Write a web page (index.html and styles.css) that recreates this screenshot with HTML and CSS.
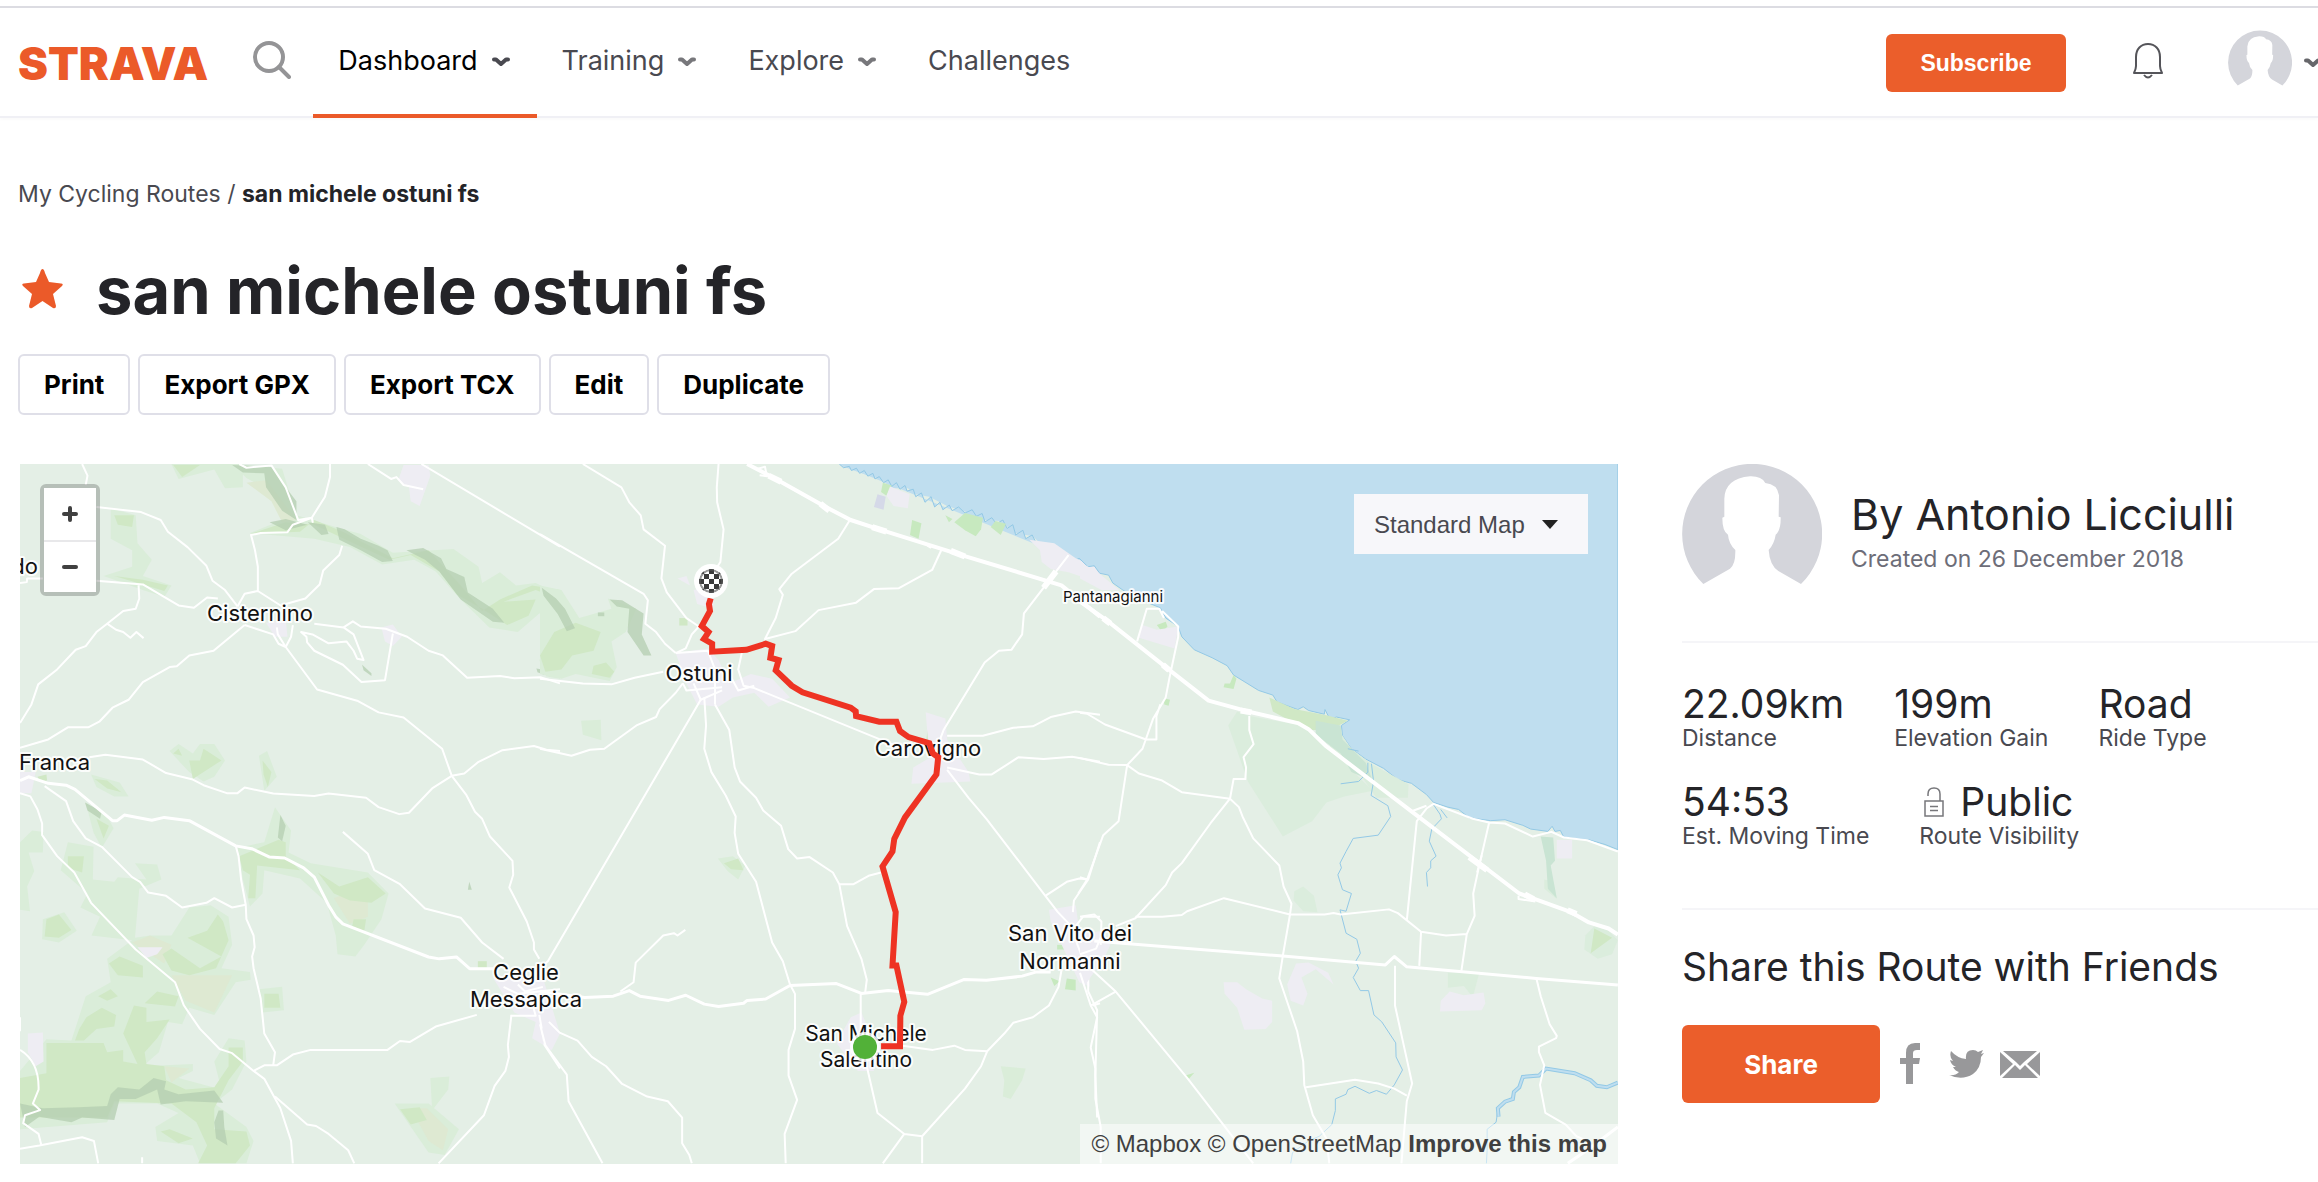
FILE: index.html
```
<!DOCTYPE html>
<html lang="en">
<head>
<meta charset="utf-8">
<title>san michele ostuni fs | Strava</title>
<meta name="viewport" content="width=device-width, initial-scale=1">
<link rel="stylesheet" href="styles.css">
</head>
<body>
<svg class="defs" aria-hidden="true">
  <symbol id="chevron" viewBox="0 0 18 10"><path d="M2 2.500L4 2.500L9 7L14 2.500L16 2.500" fill="none" stroke="currentColor" stroke-width="4" stroke-linecap="round" stroke-linejoin="round"/></symbol>
  <symbol id="avatar" viewBox="36 26 420 360"><path fill="#d4d5db" d="M100 386A210 210 0 1 1 393 386L325 347Q299 330 296 284Q313 265 317 238Q333 225 332 186L326 184L327 120Q322 86 286 83Q275 62 240 63Q165 70 163 130L163 184L157 187Q157 228 174 238Q176 265 196 284Q197 328 180 340Z"/></symbol>
</svg>

<header class="header">
  <a class="logo" href="#">STRAVA</a>
  <button class="icon-button search" aria-label="Search">
    <svg width="38" height="38" viewBox="0 0 38 38" fill="none" stroke="#949496" stroke-width="4" stroke-linecap="round"><circle cx="16" cy="16" r="14"/><path d="M26 26L36 36"/></svg>
  </button>
  <nav class="nav">
    <a class="nav-item active" href="#">Dashboard <svg width="18" height="10"><use href="#chevron"/></svg></a>
    <a class="nav-item" href="#">Training <svg width="18" height="10"><use href="#chevron"/></svg></a>
    <a class="nav-item" href="#">Explore <svg width="18" height="10"><use href="#chevron"/></svg></a>
    <a class="nav-item" href="#">Challenges</a>
  </nav>
  <div class="account">
    <button class="subscribe">Subscribe</button>
    <button class="icon-button bell" aria-label="Notifications">
      <svg width="30" height="36" viewBox="0 0 30 36" fill="none" stroke="#55555a" stroke-width="2" stroke-linejoin="round"><path d="M3 23V14C3 6 8 1 15 1S27 6 27 14V23Q27 26 29 30H1Q3 26 3 23ZM11 32Q15 37 19 32"/></svg>
    </button>
    <a class="profile" href="#" aria-label="Profile">
      <svg width="64" height="56"><use href="#avatar"/></svg>
      <svg class="profile-arrow" width="14" height="10" viewBox="0 0 14 10"><path d="M2 2.500L4 2.500L9 7L14 2.500L16 2.500" fill="none" stroke="currentColor" stroke-width="4" stroke-linecap="round" stroke-linejoin="round"/></svg>
    </a>
  </div>
</header>

<main class="main">
  <div class="crumbs"><a href="#">My Cycling Routes</a> / <strong>san michele ostuni fs</strong></div>
  <div class="title-row">
    <svg width="43" height="41" viewBox="0 0 43 41"><path d="M21.500 1Q23 1 24 5L28 14L40 15.500Q43 16 41 18L32 26L35 38Q35 41 32 40L21.500 33L11 40Q8 41 8 38L11 26L2 18Q0 16 3 15.500L15 14L19 5Q20 1 21.500 1Z" fill="#eb5a29"/></svg>
    <h1>san michele ostuni fs</h1>
  </div>
  <div class="actions">
    <button>Print</button>
    <button>Export GPX</button>
    <button>Export TCX</button>
    <button>Edit</button>
    <button>Duplicate</button>
  </div>

  <div class="content">
    <section class="map" aria-label="Route map">
      <svg class="map-canvas" viewBox="20 464 1598 700" preserveAspectRatio="xMidYMid slice">
        <rect class="land" x="20" y="464" width="1598" height="700"/>

        <!-- western tile -->
        <g transform="translate(0 450) scale(.35714 .46684)">
          <g class="wood-light">
            <path d="M480 30H680V80L630 82L600 42L500 62Z"/>
            <path d="M56 840L90 815L122 818L120 862L80 862L96 902L76 935L84 988L56 985Z"/>
            <path d="M190 840L262 850L260 920L320 925L330 915L410 920L378 885L440 888L452 920L390 940L378 1045L420 1040L480 1040L530 980L590 975L640 1000L650 1060L620 1110L700 1118L702 1135L660 1140L600 1210L530 1195L510 1230L470 1225L445 1290L400 1320L540 1315L540 1330L500 1345L620 1370L600 1310L640 1260L685 1265L690 1310L650 1370L600 1400L690 1450L710 1480L690 1528H560L540 1490L440 1480L435 1450L500 1420L440 1400L320 1400L300 1440L56 1455V1330L130 1262L200 1265L240 1170L310 1140L300 1090L370 1050L256 1040L280 1000L225 980L245 950L170 900Z"/>
            <path d="M120 1005L180 990L215 1030L165 1055L118 1048Z"/>
            <path d="M475 645L500 630L540 650L560 630L600 630L630 665L600 700L570 710L530 690Z"/>
            <path d="M725 655L748 645L775 700L740 730Z"/>
            <path d="M255 695L335 712L360 742L320 742L270 722Z"/>
            <path d="M240 755L300 785L318 810L285 852L262 820Z"/>
            <path d="M665 852L740 840L770 765L815 815L808 862L870 885L1030 905L1088 950L1068 1005L1020 1060L995 1085L945 1080L940 1040L915 970L840 918L740 900L735 950L700 978L680 920Z"/>
            <path d="M725 1155L790 1150L795 1200L735 1205Z"/>
            <path d="M1205 1345L1258 1342L1255 1370L1210 1415Z"/>
            <path d="M1105 1400L1200 1400L1285 1455L1245 1510L1200 1505Z"/>
            <path d="M310 125L380 140L385 200L425 235L400 270L480 290L460 315L400 300L290 270L370 250L370 215L310 190Z"/>
            <path d="M700 178L790 150L760 90L690 60L650 30L790 40L830 140L940 165L1010 180L1100 220L1270 212L1340 250L1350 285L1400 262L1445 290L1500 285L1568 310V345L1510 350L1450 390L1370 380L1290 320L1220 260L1160 235L1070 245L980 208L880 190L800 185Z"/>
            <path d="M1510 450L1550 410L1568 410V490L1530 485Z"/>
          </g>
          <g class="scrub">
            <path d="M690 70L745 65L830 150L790 155L760 110Z"/>
            <path d="M480 1125L650 1125L600 1205L520 1180Z"/>
            <path d="M370 1055L420 1040L480 1060L460 1100Z"/>
            <path d="M460 1320L530 1325L480 1355Z"/>
            <path d="M935 960L1030 930L1030 1000L980 1015Z"/>
            <path d="M1150 1410L1195 1410L1255 1455L1240 1500L1200 1480Z"/>
          </g>
          <g class="wood">
            <path d="M485 32H560L510 58Z"/>
            <path d="M130 1270H290L300 1290L345 1285L345 1310L385 1315L345 1250L375 1190L410 1195L410 1225L475 1220L440 1260L405 1290L410 1315L460 1320L465 1350L520 1370L600 1365L640 1320L640 1280L680 1280L680 1310L640 1350L600 1410L600 1455L690 1460L700 1490L660 1528H555L580 1490L550 1440L480 1400L320 1395L300 1430L56 1430V1345L130 1335Z"/>
            <path d="M242 1215L285 1195L325 1210L320 1235L270 1240L235 1265H210L222 1240Z"/>
            <path d="M455 1080L480 1068L560 1110L620 1085L525 1045L580 1030L610 995L625 1010L640 1050L605 1110L530 1125L480 1115Z"/>
            <path d="M305 1100L335 1085L400 1105L400 1130L330 1125Z"/>
            <path d="M130 1005L165 995L200 1028L165 1045L125 1042Z"/>
            <path d="M190 870L235 870L230 905L190 895Z"/>
            <path d="M405 1185L440 1160L500 1170L490 1192Z"/>
            <path d="M275 1170L310 1155L330 1170L300 1180Z"/>
            <path d="M530 665L560 665L570 640L600 655L620 665L570 690L540 705Z"/>
            <path d="M735 665L760 690L750 722L738 695Z"/>
            <path d="M485 650L500 640L510 655Z"/>
            <path d="M265 705L300 708L340 733L300 725Z"/>
            <path d="M270 790L305 805L290 832Z"/>
            <path d="M670 870L780 835L800 840L800 870L840 900L720 890L715 960L695 960L700 910L680 900Z"/>
            <path d="M890 905L950 935L1030 915L1080 950L1040 970L980 965L935 950Z"/>
            <path d="M990 1005L1025 1005L1020 1030L985 1025Z"/>
            <path d="M740 1165H780L785 1195L740 1195Z"/>
            <path d="M1120 1412L1175 1408L1195 1435L1150 1445Z"/>
            <path d="M450 1460L475 1455L540 1475L500 1485Z"/>
            <path d="M320 140L375 140L370 165L330 160Z"/>
            <path d="M700 180L800 155L880 160L990 200L1090 235L1150 225L1230 260L1280 310L1350 340L1420 375L1480 355L1500 320L1410 325L1500 300L1568 320V300L1490 290L1400 320L1350 345L1290 290L1200 215L1100 232L960 175L880 150L840 175Z"/>
            <path d="M1520 455L1560 430L1568 470L1540 475Z"/>
            <path d="M105 700L130 695L132 708L112 710Z"/>
            <path d="M1338 1095H1363V1109H1338Z"/>
            <path d="M320 270L400 278L470 290L460 302L400 288Z"/>
          </g>
          <g class="ridge">
            <path d="M650 32L760 36L800 80L830 110L830 150L790 130L745 80L740 50L680 48Z"/>
            <path d="M862 155L910 160L920 180L900 182Z"/>
            <path d="M942 165L965 170L1010 190L1060 205L1085 215L1100 238L1070 240L1010 215L950 192Z"/>
            <path d="M1138 215L1185 210L1235 232L1250 255L1300 272L1310 305L1380 340L1412 370L1380 368L1290 320L1230 260L1190 235Z"/>
            <path d="M1518 300L1568 320V352L1525 325Z"/>
            <path d="M238 755L285 775L280 790L245 772Z"/>
            <path d="M785 782L800 805L790 838L778 830Z"/>
            <path d="M56 1400L120 1410L220 1408L300 1405L310 1380L330 1365L390 1370L430 1345L465 1352L460 1370L500 1380L600 1372L625 1398L520 1395L450 1402L440 1370L380 1390L335 1390L320 1435L230 1430L200 1440L110 1428L70 1450Z"/>
            <path d="M612 1415H625L628 1450L637 1490L605 1475L600 1440Z"/>
            <path d="M1014 460L1040 478V484L1018 472Z"/>
            <path d="M1314 925L1321 942H1310Z"/>
            <path d="M755 155L800 148L860 160L800 172Z"/>
            <path d="M1502 468L1530 472L1525 482L1505 476Z"/>
          </g>
          <g class="urban">
            <path d="M1130 32H1200L1205 55L1175 120L1150 110L1145 80L1115 65Z"/>
            <path d="M1068 380L1100 374L1125 400L1100 420L1078 410Z"/>
            <path d="M745 370L800 365L805 400L770 400Z"/>
            <path d="M56 690L100 690L88 735L56 735Z"/>
            <path d="M78 1250L120 1248L122 1310L100 1320L78 1290Z"/>
            <path d="M385 1065L455 1065L440 1080L410 1088Z"/>
            <path d="M1380 1130L1520 1130L1568 1250L1545 1285L1490 1260L1500 1225L1440 1205Z"/>
          </g>
          <g class="road">
            <path d="M230 30L245 55L240 75M270 122L395 133L450 150L470 175L525 208L578 248L595 280L630 300L665 335"/>
            <path d="M56 285L75 283L76 275L120 275M270 280L400 288L500 333L543 338L580 316L610 318M388 290L390 318L380 340L345 345L300 372L270 390L240 420L212 428L160 470L107 502L88 545L56 585M300 372L325 385L345 390L365 402L382 390L402 403"/>
            <path d="M665 335L685 308L722 302L800 340M722 302V250L714 215L703 182L730 178L805 176L820 160L873 145L910 100L924 58V30M670 30L690 38L760 33L800 80L835 150L873 145L876 156"/>
            <path d="M800 330L855 318L895 288L905 258L950 225L958 205"/>
            <path d="M56 638L135 620L190 594H247L278 582L315 552L360 535L400 497L475 465L495 463L530 440L598 430L685 375M685 375L765 395L780 415L800 422L815 400L820 375M775 380L778 395L800 422"/>
            <path d="M800 422L888 513L1000 537L1060 562L1130 573L1238 640L1265 698L1305 738L1330 775L1350 790L1372 828L1435 880L1437 910L1426 937L1475 1010L1495 1055V1070L1510 1090"/>
            <path d="M880 372L962 380L988 367L1010 378L1080 383L1140 400L1200 430L1240 440L1308 488L1400 484L1440 489L1515 487L1568 500M1100 393L1078 493L1012 497L960 460L880 430L860 412L858 400L843 390L875 395L920 414L970 410L990 430L1000 447L1018 450L990 395L962 380"/>
            <path d="M1030 30L1095 62L1110 58L1130 75L1185 84M1180 30L1568 207"/>
            <path d="M250 658L295 653L400 663L465 692L540 706L570 718L635 735H665L685 723L765 736L880 741L920 736L1025 745L1060 765L1118 780L1145 777L1210 725L1265 698L1300 693L1340 668L1407 643L1495 634L1530 642L1568 645"/>
            <path d="M56 735L85 742L105 770L118 800V825L160 870L208 905L255 970L380 1070L490 1140L515 1190L560 1240L615 1283L650 1292L710 1330L740 1347L785 1410L815 1480L820 1528"/>
            <path d="M125 720L185 752L205 795L240 832L285 850L370 915L392 925L415 948L465 955L510 980L578 970L600 960L650 980L688 974"/>
            <path d="M660 848L668 870L675 920L688 974L690 1005L710 1040L713 1065L706 1085L710 1110L730 1175L740 1250L770 1290L765 1318M710 1330L740 1318L775 1318L820 1295L870 1285H1085L1120 1266L1148 1268L1220 1235L1335 1210"/>
            <path d="M770 1385L860 1445L885 1448L920 1465L975 1500L992 1528"/>
            <path d="M960 818L1030 865L1048 900L1120 930L1190 982L1290 1002L1350 1055L1410 1090"/>
            <path d="M1228 1528L1355 1425L1385 1362L1415 1330L1425 1300L1422 1275L1432 1210"/>
            <path d="M56 1497L110 1490L230 1472L263 1480L275 1528M398 1515V1528M56 1215V1245M56 1285Q110 1310 108 1370L92 1400L112 1414L70 1425L65 1442L108 1465L116 1490"/>
            <path d="M1510 1210L1525 1275L1568 1325M1410 1150L1450 1165L1568 1155M1430 1212H1500L1490 1185M1450 1145L1470 1160L1520 1150"/>
          </g>
          <path class="road major" d="M56 708L80 700L135 714L185 718L210 727L315 794H328L348 782L425 793L460 787L530 794L660 848L705 854L755 872L797 874L850 895L880 915L920 975L940 1000L960 1015L1200 1086L1230 1090L1278 1086L1315 1111H1390"/>
        </g>

        <!-- central tile -->
        <g transform="translate(540 450) scale(.35714 .46684)">
          <path class="sea" d="M838 30L870 42L950 62L990 82L1030 82L1050 95L1090 100L1140 120L1190 132L1240 150L1290 152L1330 178L1380 185L1410 208L1460 218L1500 240L1545 243L1568 258V30Z"/>
          <path class="coast" d="M838 30L850 38L866 35L872 44L886 39L895 50L908 44L918 56L932 50L938 62L950 57L962 70L975 64L985 78L998 70L1008 84L1022 76L1028 88L1045 84L1052 100L1068 92L1078 112L1095 100L1105 122L1120 112L1128 128L1146 118L1154 130L1172 122L1190 135L1210 128L1222 142L1238 136L1246 154L1265 145L1278 158L1296 150L1308 168L1324 160L1332 182L1352 172L1360 190L1378 182L1390 200L1404 202L1412 218L1430 208L1446 222L1462 215L1478 222L1490 240L1510 232L1530 248L1545 243L1568 258"/>
          <g class="wood-light">
            <path d="M115 580L170 578L172 622L120 610Z"/>
            <path d="M498 875L540 870L575 890L555 920L525 902Z"/>
            <path d="M1290 1320L1360 1325L1350 1350L1318 1390L1296 1385L1300 1350Z"/>
            <path d="M0 290L60 300L110 360L200 340L190 318L270 340L240 390L200 410L215 465L195 495L100 480L60 490L0 480Z"/>
          </g>
          <g class="wood">
            <path d="M390 360H413V376H390Z"/>
            <path d="M515 885L555 875L570 900L535 898Z"/>
            <path d="M40 390L100 370L170 390L150 430L90 440L60 470L15 475L0 440Z"/>
            <path d="M150 462L185 455L208 475L195 488L145 480Z"/>
          </g>
          <g class="park">
            <path d="M960 70L985 76L970 98L955 90Z"/>
            <path d="M1042 150L1068 157L1060 190L1036 182Z"/>
            <path d="M1160 155L1190 135L1240 145L1235 170L1220 185L1190 172Z"/>
            <path d="M1262 165L1275 152L1305 158L1290 182Z"/>
            <path d="M1135 140L1155 148L1145 155Z"/>
            <path d="M1515 270L1545 262L1558 275L1540 283Z"/>
            <path d="M1085 600H1100V620H1082Z"/>
            <path d="M1430 1130L1455 1138L1440 1148Z"/>
            <path d="M1475 1132L1500 1135V1158L1470 1155Z"/>
            <path d="M1448 1060H1468V1070H1448Z"/>
          </g>
          <g class="ridge">
            <path d="M5 295L45 318L70 340L98 382L75 388L50 352L10 312Z"/>
            <path d="M195 320L230 322L290 350L285 395L312 440L290 440L245 390L250 340L215 335Z"/>
            <path d="M162 348H180V356H162Z"/>
          </g>
          <g class="urban">
            <path d="M980 78L1035 95L1030 125L990 120L970 98Z"/>
            <path d="M1370 192L1440 200L1500 232L1568 255V285L1480 262L1430 255L1405 240L1400 215Z"/>
            <path d="M430 300L490 290L485 340L440 330Z"/>
            <path d="M385 275L410 270L420 290Z"/>
            <path d="M380 435L470 425L500 450L530 500L590 480L650 490L700 530L640 550L600 520L540 530L500 550L440 545L410 500Z"/>
            <path d="M1080 562L1135 575L1140 620L1200 690L1205 710L1040 715L1045 680L1090 660Z"/>
            <path d="M1425 985L1500 975L1510 1030L1568 1040V1060L1530 1080L1540 1150L1510 1140L1430 1010Z"/>
            <path d="M870 1215L900 1205L925 1250L935 1330L890 1330L830 1270Z"/>
            <path d="M5 1238L45 1258L30 1285L8 1270Z"/>
          </g>
          <path class="harbour" d="M945 95L968 100L962 128L935 122Z"/>
          <g class="road">
            <path d="M120 30L228 80L250 112L282 140L290 170L350 205L340 275L355 305L410 360L445 378M445 378L425 395L408 425L380 435M500 30L495 80L496 112L514 170L505 240L480 270"/>
            <path d="M0 180L290 308L302 322L295 372L325 390L350 415L380 435"/>
            <path d="M866 152L835 190L705 265L670 298L680 310L660 360L630 405L715 388L780 343L885 327L935 298L1005 296L1098 257L1125 212"/>
            <path d="M0 490L120 500L200 502L265 488L345 475M0 640L88 655L140 642L180 640L270 590L325 572L335 555L380 520L400 500"/>
            <path d="M450 535L22 1095L0 1110M460 530L465 590L460 640L480 690L520 740L548 785L545 820L555 865L605 925L650 1055L680 1095L700 1145M490 545L530 600L545 680L560 710L605 745L625 772L675 805L695 855L720 875L755 872L820 905L838 930L860 1020L900 1090L915 1135L910 1165"/>
            <path d="M838 930L878 930L920 912L955 905M565 435L555 470L570 505L600 510L1000 635M400 500L410 515L510 508M430 500L450 535L510 515M380 435L470 430L490 470L490 545M600 505L555 515L530 480"/>
            <path d="M1480 225L1355 350L1350 395L1320 428L1285 430L1245 455L1130 600L1110 640"/>
            <path d="M1140 612H1240L1325 595L1380 592L1430 572L1500 560L1568 567M1140 680L1230 695H1265L1340 658L1410 662L1490 657L1568 668"/>
            <path d="M1140 685L1200 745L1250 790L1415 955L1450 990L1500 1030M1415 955L1475 925L1510 918L1535 920L1568 840M1535 920L1495 965L1492 990M1500 1020L1520 1000L1568 1000"/>
            <path d="M225 1160L262 1140L268 1098L345 1040L375 1035L385 1040L407 1028"/>
            <path d="M700 1145L714 1165V1240L696 1285V1340L720 1392L685 1465L688 1528M25 1225L55 1248L105 1265L145 1300L185 1320L230 1358L300 1385L358 1395L398 1430V1485L418 1510L425 1528M0 1230L15 1275L75 1338L80 1395L175 1528"/>
            <path d="M898 1163V1240M1015 1276L1100 1285L1160 1276L1190 1285L1252 1288L1300 1250L1325 1227L1380 1215L1425 1190L1452 1150L1460 1115M1252 1288L1235 1320L1190 1368L1070 1470L1020 1465L960 1528M1070 1470V1528M915 1320L945 1420L1020 1465"/>
            <path d="M1500 1050L1535 1120V1160L1560 1200L1555 1340L1560 1430M1548 1190L1568 1185"/>
          </g>
          <path class="road major" d="M0 1160L125 1173L205 1170L250 1158L280 1170L360 1179L408 1168L460 1187L500 1192L570 1185L580 1179L632 1176L700 1147L830 1143L900 1164L975 1158L1085 1166L1188 1134L1250 1136L1350 1127L1390 1118H1430"/>
          <path class="road trunk" d="M580 30L660 62L800 122L870 150L950 170L1180 225L1460 290L1568 357"/>
          <path class="road" d="M610 40L630 36L635 56L615 54M1085 205L1095 210"/>
          <path class="road ramp" d="M640 55L675 68M785 115L810 130M930 165L970 175M1150 216L1190 228M1445 260L1410 295"/>
        </g>

        <!-- eastern tile -->
        <g transform="translate(1080 450) scale(.35714 .46684)">
          <path class="sea shore" d="M-2 232L22 250L40 248L55 264L80 268L92 285L120 300L160 318L225 338L240 360L275 378L285 400L320 428L370 445L412 462L430 482L500 515L540 525L552 540L610 556L625 550L640 558L684 566L686 556L700 577L718 572L755 578L732 590L735 612L760 640L800 662L850 682L890 706L928 714L970 738L990 755L1030 765L1060 770L1090 788L1150 794L1190 792L1240 804L1262 812L1310 817L1322 806L1330 817L1345 815L1355 830L1425 835L1470 845L1506 856V-20H-2"/>
          <g class="reserve">
            <path d="M415 590L440 560L475 570L620 590L700 640L820 730L740 742L690 755L650 795L568 828L470 710Z"/>
            <path d="M700 590L735 612L760 640L815 672L920 716L918 745L830 745L780 690L700 640Z"/>
            <path d="M600 945L625 935L655 955L665 990L625 988L598 965Z"/>
            <path d="M1030 1120H1118L1100 1172L1075 1148L1030 1152Z"/>
            <path d="M1415 1040L1440 1020L1480 1030L1506 1050L1490 1080L1450 1090L1412 1070Z"/>
            <path d="M1300 920L1325 925L1335 962L1300 940Z"/>
          </g>
          <path class="wood" d="M530 530L600 555L690 568L750 580L700 600L650 600L600 585L540 560ZM1440 1025L1490 1045L1430 1078Z"/>
          <path class="marsh" d="M660 580L730 590L735 620L800 670L820 710L760 690L730 650L660 610ZM1290 828L1325 830L1330 880L1318 890L1335 960L1310 940L1305 880Z"/>
          <g class="park">
            <path d="M430 482L438 490L430 512L402 508L405 500L420 500Z"/>
            <path d="M215 375L240 368L245 378L230 390Z"/>
            <path d="M235 532L252 535L248 548L236 545Z"/>
            <path d="M5 268L25 262L45 272L30 283Z"/>
            <path d="M295 1340L320 1334L305 1347Z"/>
          </g>
          <g class="urban">
            <path d="M175 375L215 385L275 378L265 425L165 402Z"/>
            <path d="M402 1140L440 1140L465 1155L510 1175L538 1180V1225L520 1240L460 1242L440 1195L405 1165Z"/>
            <path d="M580 1145L605 1100L640 1098L695 1120L710 1145L660 1112L620 1130L637 1165L625 1190L590 1180Z"/>
            <path d="M1010 1180L1035 1160L1075 1168L1130 1162L1135 1185L1125 1200L1008 1203Z"/>
            <path d="M1335 835H1378V875H1335Z"/>
            <path d="M0 1040L60 1030L85 1060L70 1085L20 1140L0 1120Z"/>
            <path d="M0 240L50 262L110 300L60 300L0 275Z"/>
          </g>
          <g class="river">
            <path d="M816 672L822 710L815 740L862 762L870 785L835 825L765 832L745 860L728 885L732 895L722 910L735 942L760 950L745 988L728 985L745 1035L775 1048L785 1078L772 1095L780 1110L765 1130L785 1158H808L823 1210L845 1225L884 1270L885 1300L903 1328L880 1360L858 1380L830 1372L810 1378L770 1363L750 1370L745 1380L715 1390V1415L705 1445L670 1470L640 1480L595 1505L590 1528"/>
            <path d="M990 760L1008 780L1012 790L985 812L978 838L997 870L982 880V895L970 905L973 935M730 715L780 710L806 690V670M750 640L780 645"/>
            <path d="M1170 1415L1165 1440L1140 1455V1500L1138 1528M1010 770L1028 788"/>
          </g>
          <path class="river broad" d="M1506 1355L1475 1365L1447 1362L1430 1350L1385 1335L1305 1325L1285 1340L1240 1343L1230 1365L1215 1375L1212 1390L1190 1396L1170 1410L1172 1428"/>
          <path class="river inner" d="M1506 1355L1475 1365L1447 1362L1430 1350L1385 1335L1305 1325L1285 1340L1240 1343L1230 1365L1215 1375L1212 1390L1190 1396L1170 1410L1172 1428"/>
          <g class="road">
            <path d="M230 345L275 378V400L250 490L240 530L205 575L175 640L132 675L108 795L65 825L20 920L-5 950M160 410L187 340H222L235 360M0 563L20 565L70 588L185 620H214V570L225 545M0 660L80 674L132 675L165 693L230 708L285 733L420 747"/>
            <path d="M420 747L430 705H463L465 680L458 658L486 630L474 600V570M420 747L365 800L285 885L258 905L240 932L155 1003L100 1020M420 747L445 765L455 785L485 832L558 890L570 935L592 972L588 995L568 1083L558 1132L608 1245L625 1310L628 1360L652 1425L690 1475L698 1528"/>
            <path d="M155 1000H230L285 996L300 988L403 960L588 995H685L710 992L730 995L865 984L890 992L955 1032L1025 1040L1083 1037L1105 998L1101 950L1115 900L1145 800M1083 1037L1068 1115M955 1032L950 1105M915 1008L943 795L970 768L990 758L1100 790L1145 798L1190 800L1268 828L1320 818L1355 830L1420 836L1506 860"/>
            <path d="M882 1105V1190L905 1270L930 1357L915 1395L900 1528M633 1365L770 1349L835 1357L880 1368L915 1383M1278 1132L1290 1170L1315 1230L1335 1255L1333 1260L1285 1278V1290L1300 1318L1288 1360L1303 1420L1360 1445L1390 1470L1420 1480"/>
            <path d="M0 1090L100 1160L300 1345L485 1528M100 1160L30 1190L0 1120M30 1190L48 1215L30 1280L43 1325V1390L58 1450V1528M0 1000L40 995L60 1010L58 1060M0 1080L45 1068L60 1040M0 915L20 920M1228 955V962L1275 967"/>
            <path d="M925 775L970 762M1112 905L1125 868"/>
          </g>
          <path class="road major" d="M40 1052L568 1084L855 1103L880 1085L915 1107L1278 1132L1506 1146"/>
          <path class="road trunk" d="M0 325L75 365L240 465L360 537L470 560L610 585L640 598L690 635L930 775L1230 950L1375 990L1425 1012L1480 1025L1506 1038"/>
          <path class="road ramp" d="M65 360L85 372M232 460L250 472M450 558L480 562M1090 872L1140 900M1245 952L1270 962M1365 986L1390 994"/>
          <path class="road major" d="M1366 1528L1420 1500L1506 1450"/>
        </g>

        <g class="place">
          <text x="38" y="574" text-anchor="end">do</text>
          <text x="260" y="621">Cisternino</text>
          <text x="19" y="770" text-anchor="start">Franca</text>
          <text x="526" y="980">Ceglie</text>
          <text x="526" y="1007">Messapica</text>
          <text x="699" y="681">Ostuni</text>
          <text x="928" y="756">Carovigno</text>
          <text x="1070" y="941">San Vito dei</text>
          <text x="1070" y="969">Normanni</text>
        </g>
        <g class="place town">
          <text x="866" y="1041">San Michele</text>
          <text x="866" y="1067">Salentino</text>
        </g>
        <text class="place hamlet" x="1113" y="602">Pantanagianni</text>

        <g transform="translate(540 450) scale(.35714 .46684)">
          <path class="route" d="M478 318L473 330L476 345L453 377L472 390L459 405L482 415V432L578 428L632 415L650 420L645 445L668 450L660 472L705 505L735 519L870 552L884 560L885 570L950 582H998L1008 602L1032 615L1090 628L1100 650L1115 658L1110 695L1022 787L992 833L987 860L959 892L996 990L987 1104H998L1020 1182L1009 1212L1008 1277H955"/>
        </g>
        <circle cx="865" cy="1047" r="15" fill="#fff" fill-opacity=".85"/>
        <circle cx="865" cy="1047" r="12" fill="#52b138"/>
        <circle cx="711" cy="581" r="17" fill="#fff"/>
        <clipPath id="finish"><circle cx="711" cy="581" r="12"/></clipPath>
        <g clip-path="url(#finish)">
          <path fill="#3a3a3a" d="M699 569h5v5h-5zM709 569h5v5h-5zM719 569h5v5h-5zM704 574h5v5h-5zM714 574h5v5h-5zM699 579h5v5h-5zM709 579h5v5h-5zM719 579h5v5h-5zM704 584h5v5h-5zM714 584h5v5h-5zM699 589h5v5h-5zM709 589h5v5h-5zM719 589h5v5h-5z"/>
          <circle cx="711" cy="581" r="11" fill="none" stroke="#555" stroke-opacity=".6" stroke-width="2"/>
        </g>
      </svg>

      <div class="zoom">
        <button aria-label="Zoom in"><svg width="16" height="16" viewBox="0 0 16 16"><path d="M8 2V14M2 8H14"/></svg></button>
        <button aria-label="Zoom out"><svg width="16" height="16" viewBox="0 0 16 16"><path d="M2 8H14"/></svg></button>
      </div>
      <div class="map-type">
        <select aria-label="Map type"><option>Standard Map</option></select>
        <svg width="16" height="9" viewBox="0 0 16 9"><path d="M0 0H16L8 9Z" fill="#222"/></svg>
      </div>
      <div class="attribution"><a href="#">© Mapbox</a> <a href="#">© OpenStreetMap</a> <a href="#"><strong>Improve this map</strong></a></div>
    </section>

    <aside class="sidebar">
      <div class="author">
        <svg width="140" height="120"><use href="#avatar"/></svg>
        <div class="author-text">
          <h2>By Antonio Licciulli</h2>
          <p>Created on 26 December 2018</p>
        </div>
      </div>
      <div class="stats">
        <dl class="stat-row">
          <div><dd>22.09km</dd><dt>Distance</dt></div>
          <div><dd>199m</dd><dt>Elevation Gain</dt></div>
          <div><dd>Road</dd><dt>Ride Type</dt></div>
        </dl>
        <dl class="stat-row">
          <div><dd>54:53</dd><dt>Est. Moving Time</dt></div>
          <div><dd class="visibility"><svg width="20" height="30" viewBox="0 0 20 30" fill="none" stroke="#77777b" stroke-width="1.500"><path d="M4 9V7Q4 1 10 1T16 7V14M1 14H19V29H1ZM6 19.500H14M6 23.500H14"/></svg>Public</dd><dt>Route Visibility</dt></div>
        </dl>
      </div>
      <div class="share">
        <h2>Share this Route with Friends</h2>
        <div class="share-row">
          <button class="share-button">Share</button>
          <a href="#" aria-label="Facebook"><svg width="20" height="42" viewBox="0 0 20 42"><path d="M6 41V21H0V15H6V10Q6 0 15 0H20V7H17Q13 7 13 10V15H20L19 21H13V41Z"/></svg></a>
          <a class="twitter" href="#" aria-label="Twitter"><svg width="35" height="28" viewBox="0 0 35 28"><path d="M0 25Q6 26 10 22Q6 21 4 17H7Q2 15 1 10L4 11Q0 7 2 1Q8 8 17 9Q16 0 24 0Q27 0 29 2L34 0L32 4L35 3L32 7Q32 18 24 24Q13 31 0 25Z"/></svg></a>
          <a class="mail" href="#" aria-label="Email"><svg width="40" height="27" viewBox="0 0 40 27"><path d="M3 0H37L24 11L20 15L16 11ZM0 1L13 13L0 25ZM40 1V25L27 13ZM15 14L20 19L25 14L38 27H2Z"/></svg></a>
        </div>
      </div>
    </aside>
  </div>
</main>
</body>
</html>
```
FILE: styles.css
```
* { box-sizing: border-box; }

body {
  margin: 0;
  padding-top: 6px;
  background: #fff;
  color: #242428;
  font-family: Inter, "Liberation Sans", sans-serif;
  font-size: 23px;
}

a { color: inherit; text-decoration: none; }
button { margin: 0; font-family: inherit; cursor: pointer; }
h1, h2, p, dl, dd, dt { margin: 0; }
svg { display: block; flex: none; }
.defs { position: absolute; width: 0; height: 0; }

/* Header */
.header {
  display: flex;
  align-items: center;
  height: 112px;
  padding-left: 18px;
  border-top: 2px solid #dcdce2;
  border-bottom: 2px solid #f0f0f5;
  box-shadow: 0 2px 3px rgba(0, 0, 0, .02);
}
.logo {
  color: #eb5a29;
  font-size: 45px;
  line-height: 60px;
  font-weight: 900;
  padding-top: 4px;
}
.icon-button { padding: 0; border: 0; background: none; }
.search { margin: 0 22px 4px 45px; }
.nav { display: flex; align-self: stretch; margin-bottom: -2px; }
.nav-item {
  display: flex;
  align-items: center;
  gap: 14px;
  padding: 0 27px 2px 25px;
  color: #494950;
  font-size: 27px;
  border-bottom: 4px solid transparent;
}
.nav-item svg { margin-top: 4px; color: #77777b; }
.nav-item.active { color: #000; border-bottom-color: #eb5a29; }
.nav-item.active svg { color: #494950; }
.account { display: flex; align-items: center; margin-left: auto; }
.subscribe {
  width: 180px;
  height: 58px;
  margin-top: 2px;
  padding: 0;
  border: 0;
  border-radius: 6px;
  background: #eb5e2b;
  color: #fff;
  font: bold 23px "Liberation Sans", sans-serif;
}
.bell { margin: 0 65px 2px 67px; }
.profile { display: flex; align-items: center; gap: 12px; padding-bottom: 8px; }
.profile-arrow { margin-top: 10px; color: #66666a; }

/* Page heading */
.main { padding: 62px 0 18px 18px; }
.crumbs { line-height: 28px; color: #494950; }
.crumbs strong { color: #242428; }
.title-row {
  display: flex;
  align-items: center;
  gap: 32px;
  margin-top: 47px;
  padding-left: 3px;
}
.title-row svg { margin-bottom: 6px; }
.title-row h1 { font-size: 65px; line-height: 72px; }
.actions { display: flex; gap: 8px; margin-top: 27px; }
.actions button {
  height: 61px;
  padding: 0 24px;
  border: 2px solid #dfdfe8;
  border-radius: 6px;
  background: #fff;
  color: #000;
  font-size: 26px;
  font-weight: 700;
}

/* Map and sidebar */
.content {
  display: grid;
  grid-template-columns: minmax(0, 1fr) 636px;
  gap: 64px;
  align-items: start;
  margin-top: 49px;
  padding-left: 2px;
}
.map { position: relative; overflow: hidden; }
.map-canvas { width: 100%; height: auto; }
.map-canvas path { vector-effect: non-scaling-stroke; }
.land { fill: #e4efe6; }
.sea { fill: #bfdeef; }
.shore { stroke: #93c9e6; stroke-width: 1px; }
.coast { fill: #bfdeef; stroke: #93c9e6; stroke-width: 1px; }
.wood-light { fill: #daedd9; }
.wood { fill: #d0e8c5; }
.scrub { fill: #dee9d2; }
.reserve { fill: #dbeddd; }
.marsh { fill: #c9e4d3; }
.park { fill: #c7e9bf; }
.ridge { fill: #b4cdb0; fill-opacity: .75; }
.urban { fill: #eeedf3; }
.harbour { fill: #d5d9e8; }
.river { fill: none; stroke: #93c9e6; stroke-width: 1px; }
.river.broad { stroke-width: 4px; }
.river.inner { stroke: #bfdeef; stroke-width: 2px; }
.road { fill: none; stroke: #fff; stroke-width: 2px; stroke-linejoin: round; }
.road.major { stroke-width: 3px; }
.road.trunk { stroke-width: 4px; }
.road.ramp { stroke-width: 6px; }
.place {
  font-size: 22px;
  text-anchor: middle;
  fill: #111;
  stroke: #fff;
  stroke-opacity: .9;
  stroke-width: 4px;
  stroke-linejoin: round;
  paint-order: stroke;
}
.place.town { font-size: 21px; }
.place.hamlet { font-size: 15px; }
.route { fill: none; stroke: #ee3323; stroke-width: 6px; }

.zoom {
  position: absolute;
  top: 20px;
  left: 20px;
  display: flex;
  flex-direction: column;
  width: 60px;
  border: 4px solid rgba(0, 0, 0, .2);
  border-radius: 6px;
}
.zoom button {
  display: flex;
  align-items: center;
  justify-content: center;
  height: 52px;
  padding: 0;
  border: 0;
  background: #fff;
}
.zoom button + button { border-top: 2px solid #e8e8ea; }
.zoom path { fill: none; stroke: #404040; stroke-width: 4px; stroke-linecap: round; }
.map-type { position: absolute; top: 30px; right: 30px; }
.map-type select {
  width: 234px;
  height: 60px;
  padding: 0 20px;
  border: 0;
  border-radius: 0;
  background: #f7f7fa;
  color: #494950;
  font: 24px "Liberation Sans", sans-serif;
  appearance: none;
}
.map-type svg { position: absolute; top: 26px; right: 30px; pointer-events: none; }
.attribution {
  position: absolute;
  right: 0;
  bottom: 0;
  padding: 0 11px;
  background: rgba(255, 255, 255, .5);
  color: #404040;
  font: 24px/40px "Liberation Sans", sans-serif;
}

/* Sidebar */
.author { display: flex; gap: 29px; padding-bottom: 57px; }
.author-text { padding-top: 24px; }
.author h2 { font-size: 43px; line-height: 52px; font-weight: 400; }
.author p { line-height: 38px; color: #6d6d78; }
.stats {
  display: grid;
  gap: 30px;
  padding: 39px 0 60px;
  border-top: 2px solid #f5f5f8;
  border-bottom: 2px solid #f5f5f8;
}
.stat-row { display: flex; gap: 50px; }
.stat-row dd { font-size: 39px; line-height: 44px; }
.stat-row dt { line-height: 24px; color: #494950; }
.visibility { display: flex; align-items: center; gap: 16px; padding-left: 5px; }
.share { padding-top: 33px; }
.share h2 { font-size: 39px; line-height: 48px; font-weight: 400; }
.share-row { display: flex; align-items: center; margin-top: 34px; fill: #98989a; }
.share-button {
  width: 198px;
  height: 78px;
  margin-right: 20px;
  border: 0;
  border-radius: 6px;
  background: #eb5e2b;
  color: #fff;
  font-size: 26px;
  font-weight: 700;
}
.twitter { margin: 0 16px 0 29px; }
```
